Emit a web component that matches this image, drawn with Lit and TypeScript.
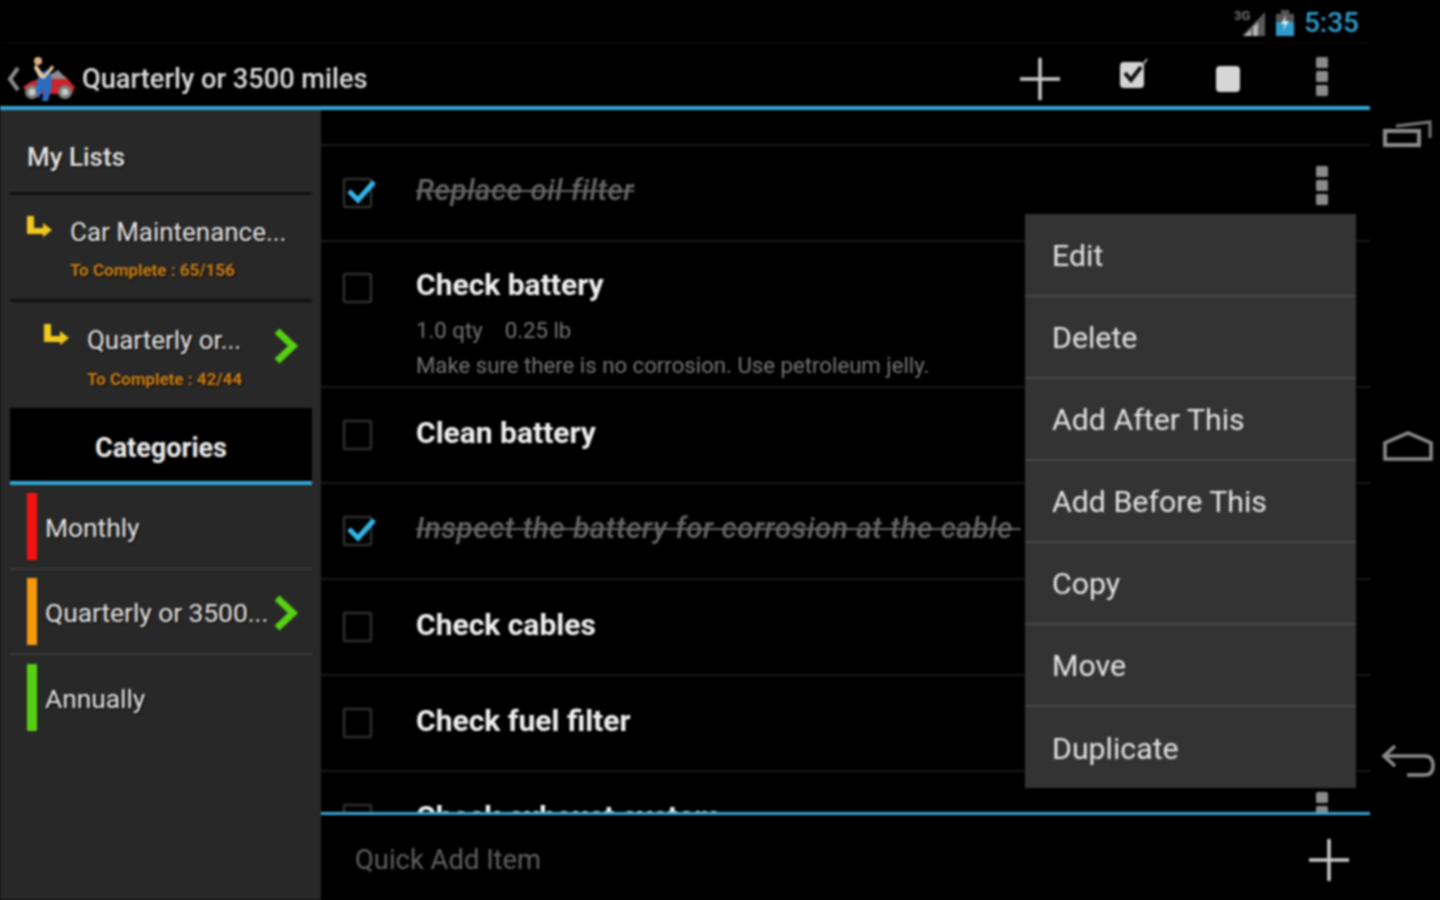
import { LitElement, html, css, svg } from "lit";
import { customElement } from "lit/decorators.js";

const kebab = html`<svg class="kebab" width="14" height="40" viewBox="0 0 14 40"><g fill="#8a8a8a"><rect x="1" y="0" width="12" height="11" rx="1.5"/><rect x="1" y="14" width="12" height="11" rx="1.5"/><rect x="1" y="28" width="12" height="11" rx="1.5"/></g></svg>`;
const plus = html`<svg width="42" height="44" viewBox="0 0 42 44"><path d="M21 1V43M1 22H41" stroke="#c8c8c8" stroke-width="3.5" fill="none"/></svg>`;
const elbow = html`<svg class="elbow" width="27" height="24" viewBox="0 0 27 24"><path d="M1 1H8V13H17V8L26 15L17 22V19H1Z" fill="#f0c81e"/></svg>`;
const chevron = html`<svg width="26" height="36" viewBox="0 0 26 36"><path d="M4 3L20 18L4 33" fill="none" stroke="#55d012" stroke-width="7"/></svg>`;

function box(checked: boolean) {
  return html`<svg class="check" width="36" height="36" viewBox="0 0 36 36">
    <rect x="3" y="4" width="27" height="28" rx="2" fill="none" stroke="#2f2f2f" stroke-width="2.5"/>
    ${checked ? svg`<path d="M8 16L17 25L33 7" fill="none" stroke="#33b5e5" stroke-width="5"/>` : ""}
  </svg>`;
}

const rows = [
  { t: "Replace oil filter", done: true, more: true },
  { t: "Check battery", done: false, tall: true },
  { t: "Clean battery", done: false },
  { t: "Inspect the battery for corrosion at the cable\u00a0", done: true },
  { t: "Check cables", done: false },
  { t: "Check fuel filter", done: false },
  { t: "Check exhaust system", done: false, more: true },
];

const menu = ["Edit", "Delete", "Add After This", "Add Before This", "Copy", "Move", "Duplicate"];
const cats = [
  { t: "Monthly", c: "#f51212" },
  { t: "Quarterly or 3500...", c: "#f59a0c", on: true },
  { t: "Annually", c: "#55d012" },
];

@customElement("app-root")
export class AppRoot extends LitElement {
  static styles = css`
    :host { display: block; width: 1440px; height: 900px; background: #000; overflow: hidden; position: relative; font-family: Roboto, "Liberation Sans", sans-serif; color: #e4e4e4; }
    .frame { display: flex; width: 1440px; height: 900px; filter: blur(0.8px); }
    .main { width: 1370px; display: flex; flex-direction: column; }
    .status { height: 44px; display: flex; align-items: center; justify-content: flex-end; padding: 2px 11px 0 0; gap: 9px; border-bottom: 1px solid #0c0c0c; box-sizing: border-box; }
    .time { font-size: 28px; color: #2e9ccb; font-weight: 500; }
    .action { height: 62px; display: flex; align-items: center; padding-top: 7px; box-sizing: border-box; }
    .back { margin-left: 7px; }
    .title { font-size: 27.2px; font-weight: 500; color: #dcdcdc; margin-left: 6px; flex: 1; }
    .acts { display: flex; padding-right: 1px; }
    .acts div { width: 94px; display: flex; justify-content: center; }
    .stop { margin-top: 8px; }
    .blue { height: 4px; background: #33a6d8; flex: none; }
    .body { flex: 1; display: flex; min-height: 0; }
    .side { width: 321px; flex: none; background: #282828; box-sizing: border-box; padding: 0 9px 0 10px; text-shadow: 1px 1px 2px #000; }
    .head { height: 82px; padding: 12px 0 0 17px; box-sizing: border-box; display: flex; align-items: center; font-size: 26px; font-weight: 500; color: #e4e4e4; }
    .rule { height: 3px; background: #101010; }
    .node { height: 104px; display: flex; box-sizing: border-box; padding: 20px 0 0 16px; }
    .node.sub { height: 106px; padding: 21px 0 0 33px; }
    .elbow { margin-right: 17px; flex: none; }
    .name { font-size: 26px; line-height: 34px; color: #e4e4e4; letter-spacing: -0.03px; }
    .count { font-size: 17px; line-height: 20px; margin-top: 11px; font-weight: 700; color: #c97f14; }
    .sub .count { margin-top: 12px; }
    .nodetext { flex: 1; }
    .node.sub svg:last-child { margin: 5px 13px 0 0; }
    .tab { height: 73px; padding-top: 6px; box-sizing: border-box; background: #000; display: flex; align-items: center; justify-content: center; font-size: 27px; font-weight: 700; color: #ececec; }
    .tabline { height: 4px; background: #33a6d8; }
    .cat { height: 85px; display: flex; align-items: center; padding-left: 17px; border-bottom: 2px solid #3a3a3a; box-sizing: border-box; font-size: 26.5px; color: #e4e4e4; }
    .cat:last-child { border-bottom: none; }
    .bar { width: 10px; height: 67px; margin-right: 8px; flex: none; }
    .cat span { flex: 1; white-space: nowrap; padding-top: 2px; letter-spacing: -0.1px; }
    .cat svg { margin: 3px 13px 0 0; }
    .right { flex: 1; display: flex; flex-direction: column; min-width: 0; }
    .list { height: 702px; overflow: hidden; flex: none; }
    .gap { height: 34px; }
    .row { height: 96px; border-top: 2px solid #1a1a1a; box-sizing: border-box; display: flex; align-items: center; padding: 0 41px 0 20px; }
    .row.tall { height: 146px; align-items: flex-start; padding-top: 25px; }
    .check { flex: none; margin-right: 39px; }
    .row.tall .check { margin-top: 3px; }
    .rt { flex: 1; min-width: 0; white-space: nowrap; overflow: hidden; padding-bottom: 5px; }
    .rn { font-size: 30px; line-height: 36px; font-weight: 700; color: #f0f0f0; }
    .done .rn { font-size: 29.5px; font-weight: 500; font-style: italic; color: #666; text-decoration: line-through; letter-spacing: 0.6px; margin-top: -1px; }
    .meta { font-size: 22.2px; line-height: 26px; color: #767676; margin-top: 14px; }
    .note { font-size: 22.2px; line-height: 26px; color: #767676; margin-top: 9px; }
    .meta b { font-weight: 400; margin-left: 22px; }
    .kebab { flex: none; margin-bottom: 14px; }
    .acts .kebab { margin-bottom: 0; }
    .foot { height: 85px; flex: none; display: flex; align-items: center; padding: 4px 20px 0 34px; box-sizing: border-box; font-size: 27.4px; color: #606060; }
    .foot span { flex: 1; }
    .line2 { height: 3px; background: #33a6d8; flex: none; }
    .nav { width: 70px; flex: none; display: flex; flex-direction: column; align-items: center; padding: 120px 0 0 6px; box-sizing: border-box; }
    .nav svg:nth-child(2) { margin-top: 282px; }
    .nav svg:nth-child(3) { margin-top: 282px; }
    .menu { position: absolute; left: 1025px; top: 214px; width: 331px; padding-top: 1px; background: #333; box-shadow: 0 0 3px #000; filter: blur(0.8px); }
    .mi { height: 82px; box-sizing: border-box; display: flex; align-items: center; padding: 1px 0 0 27px; font-size: 30.3px; color: #e4e4e4; border-bottom: 2px solid #474747; }
    .mi:last-child { border-bottom: none; height: 81px; }
  `;

  render() {
    return html`
      <div class="frame">
        <div class="main">
          <div class="status">
            <svg width="32" height="30" viewBox="0 0 32 30"><text x="0" y="12" font-size="13" font-weight="700" fill="#6f6f6f" font-family="Roboto">3G</text><path d="M8 28L31 4V28Z" fill="#5a5a5a"/><path d="M10 28L17 21V28ZM19 28V19L24 14V28Z" fill="#b4b4b4"/></svg>
            <svg width="20" height="28" viewBox="0 0 20 28"><path d="M6 1H14V5H6Z" fill="#555"/><rect x="1" y="5" width="18" height="8" fill="#555"/><rect x="1" y="13" width="18" height="14" fill="#2e9ccb"/><path d="M11 6L6 15H10L8 22L14 12H10Z" fill="#d8eef6"/></svg>
            <span class="time">5:35</span>
          </div>
          <div class="action">
            <svg class="back" width="14" height="26" viewBox="0 0 14 26"><path d="M11 2L3 13L11 24" fill="none" stroke="#8c8c8c" stroke-width="4"/></svg>
            <svg width="54" height="48" viewBox="0 0 54 48" style="margin-left:1px">
              <path d="M1 32L8 27L16 24L24 20L34 18L44 22L53 32L50 39H6Z" fill="#c8242a"/>
              <path d="M28 20L36 15L45 24H30Z" fill="#8d8d8d"/>
              <circle cx="10" cy="37" r="7" fill="#7c7c7c"/><circle cx="10" cy="37" r="3.5" fill="#c9c9c9"/>
              <circle cx="43" cy="37" r="7" fill="#7c7c7c"/><circle cx="43" cy="37" r="3.5" fill="#c9c9c9"/>
              <path d="M18 18L28 14L30 30L26 46H20L22 34L16 44L14 30Z" fill="#2a6cc0"/>
              <circle cx="16" cy="6" r="4" fill="#e0ae82"/>
              <path d="M14 9L22 20L30 10L32 13L22 24L17 22L12 13Z" fill="#e8c9a0"/>
            </svg>
            <span class="title">Quarterly or 3500 miles</span>
            <div class="acts">
              <div>${plus}</div>
              <div><svg width="30" height="32" viewBox="0 0 30 32"><rect x="1" y="5" width="24" height="26" rx="4" fill="#d4d4d4"/><path d="M6 16L12 23L22 10" fill="none" stroke="#111" stroke-width="4"/><path d="M22 10L28 2" fill="none" stroke="#b0b0b0" stroke-width="2"/></svg></div>
              <div><svg class="stop" width="26" height="28" viewBox="0 0 26 28"><rect x="1" y="1" width="24" height="26" rx="4" fill="#d6d6d6"/></svg></div>
              <div>${kebab}</div>
            </div>
          </div>
          <div class="blue"></div>
          <div class="body">
            <div class="side">
              <div class="head">My Lists</div>
              <div class="rule"></div>
              <div class="node">
                ${elbow}
                <div class="nodetext"><div class="name">Car Maintenance...</div><div class="count">To Complete : 65/156</div></div>
              </div>
              <div class="rule"></div>
              <div class="node sub">
                ${elbow}
                <div class="nodetext"><div class="name">Quarterly or...</div><div class="count">To Complete : 42/44</div></div>
                ${chevron}
              </div>
              <div class="tab">Categories</div>
              <div class="tabline"></div>
              ${cats.map(c => html`<div class="cat"><i class="bar" style="background:${c.c}"></i><span>${c.t}</span>${c.on ? chevron : ""}</div>`)}
            </div>
            <div class="right">
              <div class="list">
                <div class="gap"></div>
                ${rows.map(r => html`<div class="row ${r.done ? "done" : ""} ${r.tall ? "tall" : ""}">
                  ${box(r.done)}
                  <div class="rt">
                    <div class="rn">${r.t}</div>
                    ${r.tall ? html`<div class="meta">1.0 qty<b>0.25 lb</b></div><div class="note">Make sure there is no corrosion. Use petroleum jelly.</div>` : ""}
                  </div>
                  ${r.more ? kebab : ""}
                </div>`)}
              </div>
              <div class="line2"></div>
              <div class="foot"><span>Quick Add Item</span>${plus}</div>
            </div>
          </div>
        </div>
        <div class="nav">
          <svg width="52" height="28" viewBox="0 0 52 28"><path d="M3 11H37V25H3Z" fill="none" stroke="#8c8c8c" stroke-width="4"/><path d="M14 6L48 2V18" fill="none" stroke="#777" stroke-width="3"/></svg>
          <svg width="52" height="32" viewBox="0 0 52 32"><path d="M3 29V13L26 3L49 13V29Z" fill="none" stroke="#8c8c8c" stroke-width="3.5"/></svg>
          <svg width="54" height="34" viewBox="0 0 54 34"><path d="M14 2L3 12L14 22M3 12H44Q52 12 52 22Q52 31 44 31H26" fill="none" stroke="#8c8c8c" stroke-width="3.5"/></svg>
        </div>
      </div>
      <div class="menu">${menu.map(m => html`<div class="mi">${m}</div>`)}</div>
    `;
  }
}
